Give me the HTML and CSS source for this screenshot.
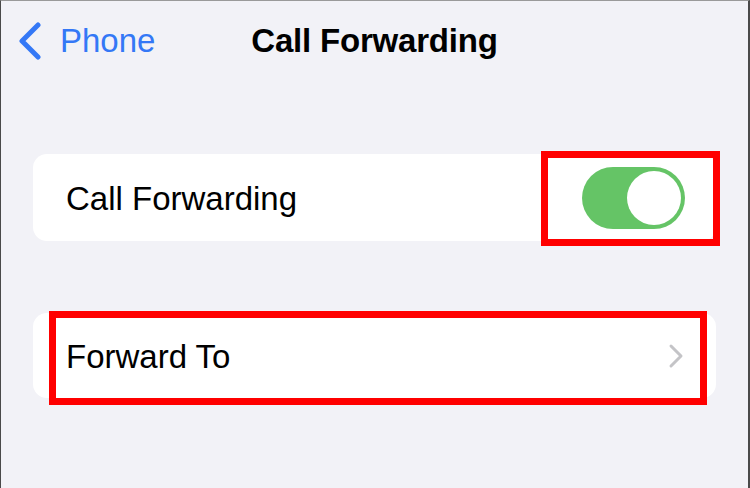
FILE: index.html
```html
<!DOCTYPE html>
<html>
<head>
<meta charset="utf-8">
<link rel="stylesheet" href="styles.css">
</head>
<body>
<div class="screen">
  <header class="nav">
    <div class="back">
      <svg class="back-icon" width="26" height="38" viewBox="0 0 26 38"><path d="M21 3 L5 19 L21 35" fill="none" stroke="#3478f6" stroke-width="5" stroke-linecap="round" stroke-linejoin="round"/></svg>
      <span class="back-label">Phone</span>
    </div>
    <div class="title">Call Forwarding</div>
    <div></div>
  </header>
  <main class="content">
    <section class="card card-toggle">
      <span class="label">Call Forwarding</span>
      <span class="toggle"><span class="knob"></span></span>
      <span class="mark mark-toggle"></span>
    </section>
    <section class="card card-link">
      <span class="label">Forward To</span>
      <svg class="chev" width="18" height="26" viewBox="0 0 18 26"><path d="M4 3 L14 13 L4 23" fill="none" stroke="#c4c4c7" stroke-width="3" stroke-linecap="round" stroke-linejoin="round"/></svg>
      <span class="mark mark-link"></span>
    </section>
  </main>
</div>
</body>
</html>
```
FILE: styles.css
```css
html, body {
  margin: 0;
  padding: 0;
}
body {
  width: 750px;
  height: 488px;
  box-sizing: border-box;
  background: #f2f2f7;
  border-left: 1px solid #4a4a4a;
  border-top: 1px solid #9a9a9a;
  border-right: 2px solid #4a4a4a;
  font-family: "Liberation Sans", Arial, sans-serif;
  color: #000;
  overflow: hidden;
}
.screen {
  display: flex;
  flex-direction: column;
}
.nav {
  display: grid;
  grid-template-columns: 1fr auto 1fr;
  align-items: center;
  padding-top: 20px;
  height: 40px;
}
.back {
  display: flex;
  align-items: center;
  padding-left: 16px;
}
.back-icon {
  display: block;
}
.back-label {
  margin-left: 17px;
  font-size: 33px;
  line-height: 40px;
  color: #3478f6;
}
.title {
  font-size: 33px;
  line-height: 40px;
  font-weight: bold;
  letter-spacing: -0.2px;
}
.content {
  display: flex;
  flex-direction: column;
  gap: 72px;
  padding: 93px 32px 0 32px;
}
.card {
  position: relative;
  display: flex;
  align-items: center;
  justify-content: space-between;
  background: #fff;
  border-radius: 14px;
  padding: 0 31px 0 33px;
}
.card-toggle {
  height: 87px;
}
.card-link {
  height: 85px;
  padding-right: 31px;
}
.label {
  font-size: 33px;
  line-height: 40px;
  padding-top: 3px;
}
.toggle {
  display: flex;
  justify-content: flex-end;
  align-items: center;
  width: 103px;
  height: 62px;
  box-sizing: border-box;
  padding: 4px;
  border-radius: 31px;
  background: #65c466;
}
.knob {
  width: 54px;
  height: 54px;
  border-radius: 50%;
  background: #fff;
}
.chev {
  display: block;
}
.mark {
  position: absolute;
  border: 7px solid #ff0000;
  box-sizing: border-box;
}
.mark-toggle {
  left: 508px;
  top: -3px;
  width: 179px;
  height: 95px;
}
.mark-link {
  left: 16px;
  top: -2px;
  width: 658px;
  height: 94px;
}
```
